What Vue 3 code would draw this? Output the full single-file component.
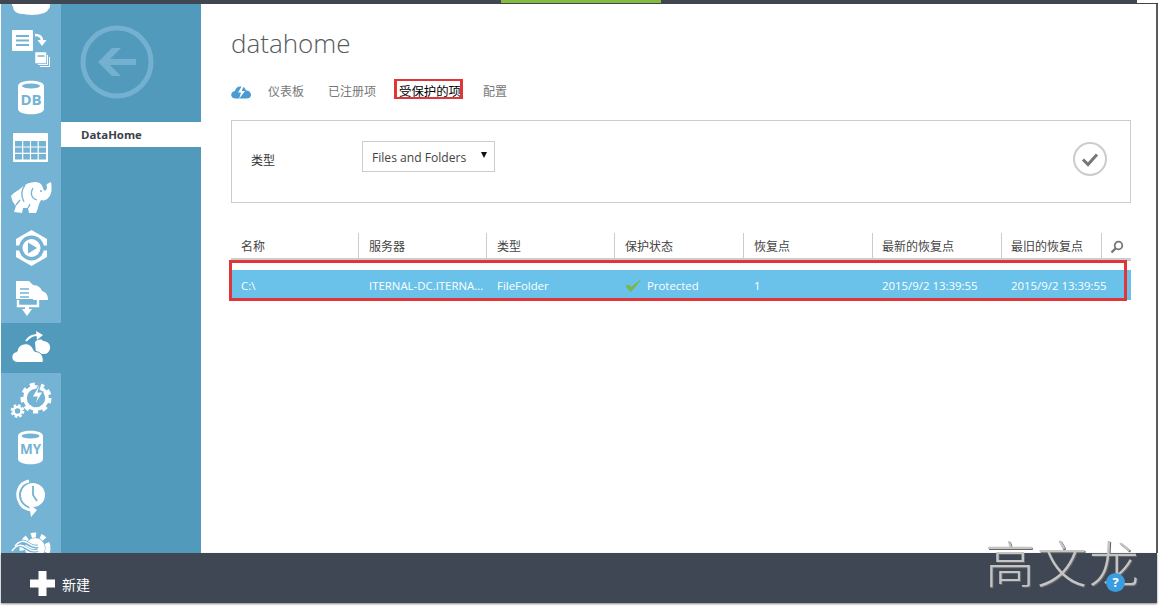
<script setup>
const columns = ['名称', '服务器', '类型', '保护状态', '恢复点', '最新的恢复点', '最旧的恢复点']
</script>

<template>
  <div class="page">
    <div class="topbar"><div class="topfill"><div class="progress"></div></div></div>
    <div class="middle">
      <nav class="rail">
        <div class="rail-item first">
          <svg viewBox="1 0 60 50"><g fill="#fff"><ellipse cx="22" cy="34" rx="9" ry="7"/><ellipse cx="32" cy="36" rx="16" ry="6"/><ellipse cx="42" cy="33" rx="8" ry="6"/><path d="M12 31h38v2H12z"/></g></svg>
        </div>
        <div class="rail-item">
          <svg viewBox="1 0 60 50">
            <rect x="12" y="7" width="21" height="21" rx="1" fill="#fff"/>
            <path d="M16 13h13M16 17.500h13M16 22h13" stroke="#74b3d3" stroke-width="1.800"/>
            <path d="M35 12c4 0 7 2 7 6" fill="none" stroke="#fff" stroke-width="2.400"/>
            <path d="M37.500 17h9l-4.500 6z" fill="#fff"/>
            <rect x="35.800" y="29.800" width="10" height="10" fill="#fff" stroke="#fff" stroke-width="1"/>
            <path d="M37.500 33h7" stroke="#74b3d3" stroke-width="1.500"/>
            <path d="M47.500 32v9.500H38M49.500 34v9.500H40" fill="none" stroke="#fff" stroke-width="1"/>
          </svg>
        </div>
        <div class="rail-item">
          <svg viewBox="1 0 60 50">
            <path d="M18 13c0-7 26-7 26 0v23c0 7-26 7-26 0z" fill="#fff"/>
            <ellipse cx="31" cy="13" rx="9" ry="2.500" fill="#74b3d3"/>
            <text x="31" y="32" class="can-text">DB</text>
          </svg>
        </div>
        <div class="rail-item">
          <svg viewBox="1 0 60 50">
            <rect x="13" y="10" width="35" height="29" rx="1" fill="#fff"/>
            <rect x="15" y="18" width="31" height="18.500" fill="#74b3d3"/>
            <path d="M22.700 18v19M30.500 18v19M38.200 18v19M15 24h31M15 30.300h31" stroke="#fff" stroke-width="1.200"/>
          </svg>
        </div>
        <div class="rail-item">
          <svg viewBox="1 0 60 50">
            <path d="M11 23C14 19 18 18 21 15 25 11 30 9 35 9c4 0 7 2 8 6 1 4 3 3 4 0 0-2-1-3 0-4l4-2c1 5 1 12-2 15-2 3-5 4-8 3l-2 4c-1 4-2 7-3 9h-7l-1-5h-5l-1 5-8-1 2-6c-3-3-4-6-5-10z" fill="#fff"/>
            <path d="M25 12c-4 5-4 11-1 17M33 15c-3 5-2 10 4 12M20 27l-4 5M30 31l-2 4" fill="none" stroke="#74b3d3" stroke-width="1.300"/>
            <circle cx="41" cy="18" r="1" fill="#74b3d3"/>
          </svg>
        </div>
        <div class="rail-item">
          <svg viewBox="1 0 60 50">
            <path d="M31.500 7 47 16v18L31.500 43 16 34V16z" fill="#fff"/>
            <circle cx="31.500" cy="25" r="12.500" fill="#74b3d3"/>
            <path d="M12 25h8M43 25h8" stroke="#74b3d3" stroke-width="5"/>
            <circle cx="31.500" cy="25" r="9" fill="#fff"/>
            <path d="M28 19.500v11l9-5.500z" fill="#74b3d3"/>
          </svg>
        </div>
        <div class="rail-item">
          <svg viewBox="1 0 60 50">
            <path d="M16 8h13l4 4v14H16z" fill="#fff"/>
            <path d="M20 16h9M20 20h9M20 24h9" stroke="#74b3d3" stroke-width="1.600"/>
            <path d="M33 12c5 0 8 3 9 6 4 1 6 4 6 9H33z" fill="#fff"/>
            <path d="M18 27v6h20v-6" fill="none" stroke="#fff" stroke-width="2.400"/>
            <path d="M25 33h4v3h3l-5 7-5-7h3z" fill="#fff"/>
          </svg>
        </div>
        <div class="rail-item active">
          <svg viewBox="1 0 60 50">
            <path d="M35 19c3-3 7-3 8-1 5 0 8 4 7 8-1 3-3 5-6 5H36z" fill="#fff"/>
            <path d="M26 18c3-4 7-6 11-6" fill="none" stroke="#fff" stroke-width="2"/>
            <path d="M36 8l7 4-6 5z" fill="#fff"/>
            <path d="M18 39.500c-8 0-8-10-1-11 1-8 12-11 16-3 1 2 1 3 3 3 6 1 8 6 7 11z" fill="#fff" stroke="#519abc" stroke-width="1"/>
          </svg>
        </div>
        <div class="rail-item">
          <svg viewBox="1 0 60 50">
            <circle cx="36" cy="25" r="13.500" fill="none" stroke="#fff" stroke-width="4" stroke-dasharray="5 4.500"/>
            <circle cx="36" cy="25" r="11" fill="none" stroke="#fff" stroke-width="3.600"/>
            <path d="M42 7 32 24h5l-3 10 9-15h-5z" fill="#fff" stroke="#74b3d3" stroke-width="1.200"/>
            <circle cx="17.500" cy="38" r="5.500" fill="none" stroke="#fff" stroke-width="2.800" stroke-dasharray="2.500 1.800"/>
            <circle cx="17.500" cy="38" r="4" fill="none" stroke="#fff" stroke-width="2.500"/>
          </svg>
        </div>
        <div class="rail-item">
          <svg viewBox="1 0 60 50">
            <path d="M18 13c0-7 25-7 25 0v23c0 7-25 7-25 0z" fill="#fff"/>
            <ellipse cx="30.500" cy="13" rx="9" ry="2.500" fill="#74b3d3"/>
            <text x="30.500" y="31" class="can-text my">MY</text>
          </svg>
        </div>
        <div class="rail-item">
          <svg viewBox="1 0 60 50">
            <circle cx="33" cy="22" r="12" fill="#fff"/>
            <path d="M33 13v9l4 6" fill="none" stroke="#74b3d3" stroke-width="1.800"/>
            <path d="M29 8C18 10 15 22 20 30c2 4 6 6 10 7" fill="none" stroke="#fff" stroke-width="2.800"/>
            <path d="M29 31l8 6-6 7z" fill="#fff"/>
          </svg>
        </div>
        <div class="rail-item">
          <svg viewBox="1 0 60 50">
            <circle cx="35" cy="25" r="13" fill="none" stroke="#fff" stroke-width="5" stroke-dasharray="5 4.500"/>
            <circle cx="35" cy="25" r="10" fill="#fff"/>
            <path d="M11 28c5-7 10-7 15-3s9 3 12 2M14 23c4-5 9-6 13-3s8 4 11 3" fill="none" stroke="#74b3d3" stroke-width="3.500"/>
            <path d="M12 28c5-7 10-7 15-3s9 3 12 2M15 23c4-5 9-6 13-3s8 4 11 3" fill="none" stroke="#fff" stroke-width="1.500"/>
          </svg>
        </div>
      </nav>

      <aside class="panel-nav">
        <svg class="back" viewBox="0 0 80 80">
          <circle cx="40" cy="40" r="34" fill="none" stroke="#74b0cf" stroke-width="5"/>
          <path d="M21 40 35 26h9L33 37h26v6H33l11 11h-9z" fill="#74b0cf"/>
        </svg>
        <div class="panel-item">DataHome</div>
      </aside>

      <main class="content">
        <h1 class="title">datahome</h1>
        <div class="tabs">
          <svg class="tab-icon" viewBox="0 0 20 14">
            <path d="M5 13.500C1 13.500-.5 11 .5 8.500 1 7 2.500 6 4 6 4.500 3 7 1 10 1.500c3 .5 4 1 5 4 3 0 5 2 5 4.500s-2 3.500-4.500 3.500z" fill="#4a9bd4"/>
            <path d="M11.500 0 7 7.500h3L8 14l6-8h-3.200L13 0z" fill="#fff"/>
          </svg>
          <span class="tab">仪表板</span>
          <span class="tab">已注册项</span>
          <span class="tab current">受保护的项</span>
          <span class="tab">配置</span>
        </div>

        <section class="filter">
          <label class="filter-label">类型</label>
          <div class="select">
            <span>Files and Folders</span>
            <i class="caret"></i>
          </div>
          <svg class="apply" viewBox="0 0 34 34">
            <circle cx="17" cy="17" r="16" fill="none" stroke="#ccc" stroke-width="2"/>
            <path d="M10 17.500l5 5 9-10" fill="none" stroke="#777" stroke-width="3"/>
          </svg>
        </section>

        <div class="table">
          <div class="thead">
            <div v-for="c in columns" :key="c" class="th">{{ c }}</div>
            <div class="th search">
              <svg viewBox="0 0 14 14" width="14" height="14">
                <circle cx="8.500" cy="5.500" r="3.800" fill="none" stroke="#777" stroke-width="1.800"/>
                <path d="M6 8 1.500 12.500" stroke="#777" stroke-width="2.400"/>
              </svg>
            </div>
          </div>
          <div class="row-area">
            <div class="row">
              <div class="td">C:\</div>
              <div class="td">ITERNAL-DC.ITERNA...</div>
              <div class="td">FileFolder</div>
              <div class="td status">
                <svg viewBox="0 0 16 14" width="16" height="14"><path d="M1 7.500l5 5L15 1.500 6 8.500 3.500 6z" fill="#7ab648" stroke="#7ab648" stroke-width="1"/></svg>
                <span>Protected</span>
              </div>
              <div class="td">1</div>
              <div class="td">2015/9/2 13:39:55</div>
              <div class="td">2015/9/2 13:39:55</div>
              <div class="td"></div>
            </div>
            <div class="row-mark"></div>
          </div>
        </div>
      </main>
    </div>

    <footer class="bottombar">
      <svg class="plus" viewBox="0 0 25 25"><path d="M8.500 0h8v8.500H25v8h-8.500V25h-8v-8.500H0v-8h8.500z" fill="#fff"/></svg>
      <span class="new">新建</span>
      <span class="help">?</span>
    </footer>
    <div class="watermark">高文龙</div>
  </div>
</template>

<style>
html, body { margin: 0; background: #fff; }
</style>

<style scoped>
.page {
  position: relative;
  width: 1160px;
  height: 606px;
  overflow: hidden;
  display: flex;
  flex-direction: column;
  background: #fff;
  font-family: "Open Sans", "Noto Sans CJK SC", sans-serif;
}
.topbar {
  height: 4px;
  width: 1158px;
  box-sizing: border-box;
  flex: none;
  border-bottom: 1px solid #444;
}
.topfill {
  width: 1137px;
  height: 3px;
  background: #3e4753;
  padding-left: 501px;
  box-sizing: border-box;
}
.progress { width: 160px; height: 3px; background: #84bb41; }
.middle { flex: 1; min-height: 0; display: flex; padding-left: 1px; }
.rail {
  width: 60px;
  flex: none;
  overflow: hidden;
  background: #74b3d3;
}
.rail-item { height: 50px; }
.rail-item.first { margin-top: -31px; }
.rail-item.active { background: #519abc; }
.rail-item svg { display: block; width: 60px; height: 50px; }
.can-text {
  font: 700 15px "Open Sans", sans-serif;
  fill: #74b3d3;
  text-anchor: middle;
}
.can-text.my { font-size: 13.500px; }
.panel-nav { width: 140px; flex: none; background: #519abc; }
.back { display: block; width: 80px; height: 80px; margin: 18px 0 20px 16px; }
.panel-item {
  height: 25px;
  line-height: 25px;
  padding-left: 20px;
  background: #fff;
  color: #3b3f4a;
  font-size: 11.400px;
  font-weight: 700;
}
.content {
  flex: 1;
  min-width: 0;
  padding: 0 25px 0 30px;
  margin-right: 2px;
  border-right: 2px solid #5a5a5a;
  box-sizing: border-box;
}
.title {
  margin: 19px 0 0;
  height: 40px;
  line-height: 40px;
  font-size: 26px;
  font-weight: 300;
  color: #555a60;
}
.tabs {
  margin-top: 19px;
  height: 20px;
  display: flex;
  align-items: center;
  gap: 24px;
  font-size: 12px;
  color: #777;
}
.tab-icon { width: 20px; height: 14px; margin-right: -7px; }
.tab { line-height: 20px; position: relative; }
.tab.current { color: #000; font-size: 12.400px; margin: 0 -2px 0 -1px; }
.tab.current::after {
  content: "";
  position: absolute;
  left: -5px;
  right: -2px;
  top: -3px;
  bottom: 3px;
  border-style: solid;
  border-color: #e0363a;
  border-width: 2px 3px;
}
.filter {
  margin-top: 18px;
  height: 83px;
  box-sizing: border-box;
  border: 1px solid #ccc;
  display: flex;
  align-items: flex-start;
  padding: 20px 23px 0 19px;
}
.filter-label { width: 111px; font-size: 12px; color: #333; line-height: 40px; }
.select {
  width: 133px;
  height: 31px;
  box-sizing: border-box;
  border: 1px solid #ccc;
  display: flex;
  align-items: center;
  justify-content: space-between;
  padding: 1px 7px 0 9px;
  font-size: 12.100px;
  color: #444;
}
.caret {
  width: 0;
  height: 0;
  border: 3px solid transparent;
  border-top: 6px solid #111;
  border-bottom: 0;
  margin-bottom: 4px;
}
.apply { width: 34px; height: 34px; margin: 1px 0 0 auto; }
.table { margin-top: 30px; }
.thead, .row {
  display: grid;
  grid-template-columns: 127px 128px 128px 129px 129px 129px 100px 30px;
}
.thead {
  height: 25px;
  border-bottom: 3px solid #ccc;
  grid-template-rows: 25px;
}
.th {
  border-left: 1px solid #ccc;
  box-sizing: border-box;
  padding: 1px 0 0 10px;
  font-size: 12px;
  line-height: 25px;
  color: #444;
}
.th:first-child { border-left: 0; }
.th:nth-child(6), .th:nth-child(7) { padding-left: 9px; }
.th.search { padding: 7px 0 0 8px; }
.th.search svg { display: block; }
.row-area { position: relative; padding-top: 9px; }
.row {
  height: 30px;
  grid-template-rows: 30px;
  background: #6ac2ea;
  color: #fff;
  font-size: 11.400px;
  line-height: 30px;
}
.td { padding: 1px 0 0 11px; box-sizing: border-box; white-space: nowrap; }
.td:first-child, .td:nth-child(6), .td:nth-child(7) { padding-left: 10px; }
.status { display: flex; align-items: center; gap: 6px; }
.row-mark {
  position: absolute;
  left: -2px;
  right: 4px;
  top: -1px;
  height: 41px;
  box-sizing: border-box;
  border: 3px solid #e0363a;
}
.bottombar {
  flex: none;
  height: 50px;
  margin: 0 3px 3px 1px;
  background: #3e4753;
  position: relative;
  display: flex;
  align-items: center;
  padding-left: 29px;
  box-shadow: 0 1px 2px #888;
}
.plus { width: 25px; height: 25px; margin-top: 11px; }
.new { margin: 11px 0 0 7px; font-size: 14px; color: #fff; }
.help {
  position: absolute;
  left: 1105px;
  top: 20px;
  z-index: 2;
  width: 19px;
  height: 19px;
  border-radius: 50%;
  background: #3a9de0;
  color: #fff;
  font-size: 13px;
  font-weight: 700;
  line-height: 19px;
  text-align: center;
}
.watermark {
  position: absolute;
  left: 985px;
  top: 525px;
  font-family: "Noto Sans CJK SC", sans-serif;
  font-size: 50px;
  line-height: 72px;
  font-weight: 300;
  letter-spacing: 2px;
  color: #c4c4c4;
  text-shadow: 1px 1px 0 #666;
}
</style>
